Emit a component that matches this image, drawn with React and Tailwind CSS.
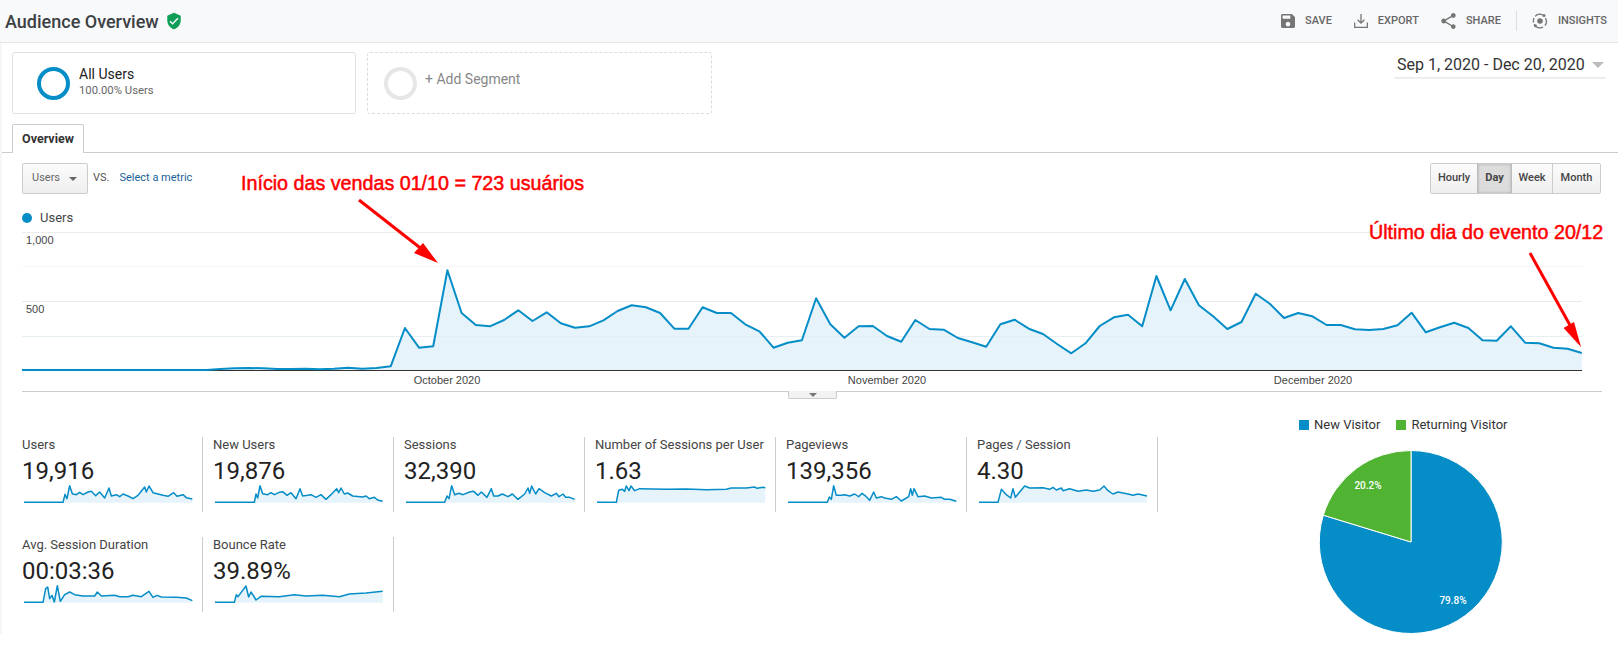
import React from "react";

// measured from the chart, one value per day (Sep 1 - Dec 20)
const users = [
  510, 510, 510, 510, 510, 510, 510, 510, 510, 510, 510, 510, 510, 510, 507, 505, 504, 505, 507, 507, 506, 508, 506,
  503, 506, 504, 499, 384, 443, 439, 211, 339, 375, 379, 360, 331, 363, 337, 370, 383, 379, 361, 333, 316, 322, 339,
  386, 386, 322, 339, 339, 373, 394, 443, 428, 421, 295, 373, 413, 379, 378, 408, 425, 360, 387, 389, 414, 427, 440,
  373, 359, 386, 402, 432, 460, 430, 378, 352, 344, 379, 228, 331, 237, 316, 349, 387, 366, 281, 311, 354, 339, 349,
  375, 375, 388, 390, 387, 376, 338, 397, 382, 368, 384, 421, 422, 379, 428, 430, 443, 446, 459,
];

const chartLine = users.map((v, i) => `${(i * 14.18).toFixed(1)},${(v / 3 - 28).toFixed(1)}`).join(" ");

const metrics = [
  {
    label: "Users",
    value: "19,916",
    x0: 13,
    spark: "13,61 130,61 136,37 142,50 150,11 158,35 170,38 180,31 190,38 205,30 215,28 228,41 240,30 255,48 268,18 275,42 290,38 300,44 310,36 325,42 340,50 355,40 375,15 380,30 388,12 400,32 415,36 430,40 445,43 462,32 472,43 490,38 500,47 518,51",
  },
  {
    label: "New Users",
    value: "19,876",
    x0: 587,
    spark: "587,61 705,61 710,36 715,48 722,11 730,35 745,38 755,32 765,38 780,31 790,29 803,40 815,32 830,50 842,20 850,42 865,40 875,38 890,46 905,38 920,52 935,38 952,20 958,32 965,18 975,36 985,33 1000,42 1030,45 1040,42 1050,50 1065,46 1075,54 1090,58",
  },
  {
    label: "Sessions",
    value: "32,390",
    x0: 19,
    spark: "19,61 135,61 142,42 148,50 156,11 165,38 178,34 190,38 210,30 222,28 235,40 245,30 262,46 275,20 282,42 295,42 308,36 325,44 338,36 355,52 375,36 385,18 390,34 396,12 408,36 418,20 435,32 455,42 470,34 478,44 490,36 498,46 510,46 525,52",
  },
  {
    label: "Number of Sessions per User",
    value: "1.63",
    x0: 592,
    spark: "592,61 650,61 657,25 668,22 675,28 680,12 688,26 694,12 705,26 720,20 760,21 800,22 860,21 920,23 980,22 995,18 1040,18 1065,15 1072,19 1090,16 1097,17",
  },
  {
    label: "Pageviews",
    value: "139,356",
    x0: 10,
    spark: "10,61 128,61 134,45 140,52 147,11 155,40 170,40 180,38 195,42 210,36 222,44 232,34 245,44 255,55 267,30 275,48 290,44 300,48 320,52 335,44 350,57 372,44 378,20 383,40 388,20 400,44 420,42 440,48 470,46 480,52 495,52 515,58",
  },
  {
    label: "Pages / Session",
    value: "4.30",
    x0: 583,
    spark: "583,61 640,61 650,22 665,38 678,48 685,20 692,46 705,30 720,12 735,18 775,17 795,22 805,16 815,24 830,18 835,26 855,20 880,28 905,24 925,28 945,24 958,12 970,26 985,36 1000,30 1030,36 1045,40 1060,36 1087,42",
  },
  {
    label: "Avg. Session Duration",
    value: "00:03:36",
    x0: 13,
    spark: "13,61 70,61 78,20 84,15 90,50 97,40 104,60 113,11 122,58 135,38 150,30 165,38 190,42 225,42 233,30 245,42 285,40 300,44 325,44 340,40 365,44 388,28 400,46 412,40 425,45 470,46 500,48 518,56",
  },
  {
    label: "Bounce Rate",
    value: "39.89%",
    x0: 587,
    spark: "587,61 645,61 651,38 656,44 665,32 680,12 688,45 695,30 703,42 710,54 725,43 780,44 825,38 860,42 910,40 960,44 990,36 1040,33 1090,28",
  },
];

function HeaderAction({ icon, label }) {
  return (
    <div className="flex items-center gap-[10px]">
      {icon}
      <span className="text-[11px] font-medium text-[#666]">{label}</span>
    </div>
  );
}

function Metric({ metric, first }) {
  const pts = metric.spark.split(" ");
  const last = pts[pts.length - 1].split(",")[0];
  return (
    <div className={`h-[75px] border-r border-[#ccc] ${first ? "" : "pl-[10px]"}`}>
      <div className="h-[15px] text-[13px] leading-[15px] text-[#444] whitespace-nowrap">{metric.label}</div>
      <div className="mt-[7px] h-[24px] text-[24px] leading-[24px] text-[#222]">{metric.value}</div>
      <svg viewBox={`${metric.x0} 0 510 72`} className="ml-[2px] mt-[-1px] h-[24px] w-[170px]">
        <polygon points={`${metric.x0},62 ${metric.spark} ${last},62`} fill="#e6f3fa" />
        <polyline points={metric.spark} fill="none" stroke="#058dc7" strokeWidth="4.5" strokeLinejoin="round" />
      </svg>
    </div>
  );
}

function Arrow({ d, head }) {
  return (
    <>
      <path d={d} stroke="#ff0000" strokeWidth="3" fill="none" />
      <polygon points={head} fill="#ff0000" />
    </>
  );
}

export default function App() {
  return (
    <div className="relative h-[664px] w-[1618px] overflow-hidden bg-white font-['Roboto',sans-serif]">
      <header className="flex h-[43px] items-center justify-between border-b border-[#e4e4e4] bg-[#f8f9fa] pl-[5px] pr-[11px]">
        <div className="flex items-center gap-[6px]">
          <h1 className="text-[18px] font-medium text-[#3c4043]">Audience Overview</h1>
          <svg viewBox="0 0 24 24" className="h-[18px] w-[18px]" fill="#0f9d58">
            <path d="M12 1L3 5v6c0 5.55 3.84 10.74 9 12 5.16-1.26 9-6.45 9-12V5l-9-4zm-2 16l-4-4 1.41-1.41L10 14.17l6.59-6.59L18 9l-8 8z" />
          </svg>
        </div>
        <div className="flex items-center gap-[15px]">
          <div className="flex items-center gap-[22px]">
            <HeaderAction
              label="SAVE"
              icon={
                <svg viewBox="3 3 18 18" className="h-[14px] w-[14px]" fill="#757575">
                  <path d="M17 3H5c-1.11 0-2 .9-2 2v14c0 1.1.89 2 2 2h14c1.1 0 2-.9 2-2V7l-4-4zm-5 16c-1.66 0-3-1.34-3-3s1.34-3 3-3 3 1.34 3 3-1.34 3-3 3zm3-10H5V5h10v4z" />
                </svg>
              }
            />
            <HeaderAction
              label="EXPORT"
              icon={
                <svg viewBox="0 0 14 14" className="h-[14px] w-[14px]" fill="none" stroke="#757575" strokeWidth="1.3">
                  <path d="M7 0v9M3.6 5.8 7 9.2l3.4-3.4M.6 8.5v4.9h12.8V8.5" />
                </svg>
              }
            />
            <HeaderAction
              label="SHARE"
              icon={
                <svg viewBox="3 2 18 20" className="h-[16px] w-[15px]" fill="#757575">
                  <path d="M18 16.08c-.76 0-1.44.3-1.96.77L8.91 12.7c.05-.23.09-.46.09-.7s-.04-.47-.09-.7l7.05-4.11c.54.5 1.25.81 2.04.81 1.66 0 3-1.34 3-3s-1.34-3-3-3-3 1.34-3 3c0 .24.04.47.09.7L8.04 9.81C7.5 9.31 6.79 9 6 9c-1.66 0-3 1.34-3 3s1.34 3 3 3c.79 0 1.5-.31 2.04-.81l7.12 4.16c-.05.21-.08.43-.08.65 0 1.61 1.31 2.92 2.92 2.92 1.61 0 2.92-1.31 2.92-2.92s-1.31-2.92-2.92-2.92z" />
                </svg>
              }
            />
          </div>
          <div className="flex h-[20px] items-center border-l border-[#ddd] pl-[15px]">
            <HeaderAction
              label="INSIGHTS"
              icon={
                <svg viewBox="0 0 16 16" className="h-[16px] w-[16px]">
                  <path d="M3 3.4A6.7 6.7 0 0 1 10.6 1.8M13.4 5A6.7 6.7 0 0 1 13 12.6M11 14.2A6.7 6.7 0 0 1 2 11.2M1.6 9.5A6.7 6.7 0 0 1 2 5" fill="none" stroke="#757575" strokeWidth="1.3" />
                  <circle cx="8" cy="8" r="2.8" fill="#757575" />
                  <circle cx="12" cy="2.6" r="1.5" fill="#757575" />
                  <circle cx="3.4" cy="12.8" r="1.5" fill="#757575" />
                </svg>
              }
            />
          </div>
        </div>
      </header>

      <div className="border-l-2 border-[#f6f6f6]">
        <div className="flex items-start justify-between pl-[10px] pr-[12px] pt-[9px]">
          <div className="flex gap-[11px]">
            <div className="flex h-[62px] w-[344px] items-center gap-[9px] rounded-[3px] border border-[#e0e0e0] pl-[24px]">
              <div className="h-[33px] w-[33px] rounded-full border-[4px] border-[#058dc7]" />
              <div className="-mt-[3px]">
                <div className="text-[14px] leading-[17px] text-[#222]">All Users</div>
                <div className="text-[11.3px] leading-[15px] text-[#666]">100.00% Users</div>
              </div>
            </div>
            <div className="flex h-[62px] w-[345px] items-center gap-[9px] rounded-[3px] border border-dashed border-[#dcdcdc] pl-[16px]">
              <div className="h-[33px] w-[33px] rounded-full border-[4px] border-[#e6e6e6]" />
              <div className="-mt-[8px] -ml-[1px] text-[14px] text-[#888]">+ Add Segment</div>
            </div>
          </div>
          <div className="flex h-[27px] w-[212px] items-start gap-[8px] border-b-2 border-[#eee] pl-[3px]">
            <span className="text-[16px] leading-[25px] text-[#333]">Sep 1, 2020 - Dec 20, 2020</span>
            <span className="-ml-[1px] mt-[10px] h-0 w-0 border-x-[6px] border-t-[6px] border-x-transparent border-t-[#bbb]" />
          </div>
        </div>

        <div className="mt-[10px] h-[29px] border-b border-[#ccc] pl-[10px]">
          <div className="flex h-[29px] w-[72px] items-center justify-center rounded-t-[2px] border border-b-0 border-[#ccc] bg-white text-[12.5px] font-bold text-[#333]">
            Overview
          </div>
        </div>

        <div className="mt-[10px] flex items-center pl-[20px] pr-[17px]">
          <div className="flex h-[31px] w-[66px] items-center gap-[9px] rounded-[2px] border border-[#ccc] bg-gradient-to-b from-[#fbfbfb] to-[#efefef] pl-[9px] text-[11px] text-[#666]">
            Users
            <span className="h-0 w-0 border-x-[4px] border-t-[4px] border-x-transparent border-t-[#666]" />
          </div>
          <span className="ml-[5px] text-[11px] text-[#555]">VS.</span>
          <span className="ml-[10px] text-[11px] text-[#1a5f96]">Select a metric</span>
          <div className="ml-auto flex h-[31px] rounded-[2px] border border-[#ccc] text-[11px] font-medium text-[#444]">
            <div className="flex w-[46px] items-center justify-center bg-gradient-to-b from-[#fbfbfb] to-[#efefef]">Hourly</div>
            <div className="flex w-[35px] items-center justify-center border-x border-[#bbb] bg-[#dcdcdc] font-bold shadow-[inset_0_0_3px_#aaa]">Day</div>
            <div className="flex w-[41px] items-center justify-center border-r border-[#ccc] bg-gradient-to-b from-[#fbfbfb] to-[#efefef]">Week</div>
            <div className="flex w-[47px] items-center justify-center bg-gradient-to-b from-[#fbfbfb] to-[#efefef]">Month</div>
          </div>
        </div>

        <div className="ml-[20px] mt-[15px] flex h-[17px] items-center gap-[8px] text-[13px] text-[#444]">
          <span className="h-[10px] w-[10px] rounded-full bg-[#058dc7]" />
          Users
        </div>

        <div className="relative ml-[20px] mt-[2px] h-[172px] w-[1580px]">
          <svg viewBox="0 0 1580 172" className="h-[172px] w-[1580px] font-['Liberation_Sans',sans-serif]">
            <path d="M0 4.5H1560M0 73.5H1560" stroke="#ececec" />
            <path d="M0 38.5H1560M0 108.5H1560" stroke="#f5f5f5" />
            <polygon points={`0,142 ${chartLine} 1560,142`} fill="#e6f3fa" />
            <path d="M0 108.5H1560" stroke="#dbe9f0" strokeOpacity="0.5" />
            <path d="M0 73.5H1560" stroke="#dbe9f0" strokeOpacity="0.3" />
            <path d="M0 142.5H1560" stroke="#333" />
            <polyline points={chartLine} fill="none" stroke="#058dc7" strokeWidth="2" strokeLinejoin="round" />
            <text x="4" y="16" fontSize="11" fill="#444">1,000</text>
            <text x="4" y="85" fontSize="11" fill="#444">500</text>
            <text x="425" y="156" fontSize="11" fill="#444" textAnchor="middle">October 2020</text>
            <text x="865" y="156" fontSize="11" fill="#444" textAnchor="middle">November 2020</text>
            <text x="1291" y="156" fontSize="11" fill="#444" textAnchor="middle">December 2020</text>
            <path d="M0 163.5H1580" stroke="#ccc" />
          </svg>
          <div className="absolute left-[766px] top-[163px] flex h-[8px] w-[49px] items-center justify-center rounded-b-[2px] border border-t-0 border-[#ccc] bg-[#f2f2f2]">
            <span className="h-0 w-0 border-x-[4px] border-t-[4px] border-x-transparent border-t-[#777]" />
          </div>
        </div>

        <div className="flex items-start pl-[20px]">
          <div className="mt-[37px] grid w-[1136px] grid-cols-[181px_repeat(5,191px)] gap-y-[25px]">
            {metrics.map((m, i) => (
              <Metric key={m.label} metric={m} first={i === 0 || i === 6} />
            ))}
          </div>
          <div className="ml-[141px] mt-[18px]">
            <div className="flex h-[14px] items-center text-[13px] text-[#333]">
              <span className="mr-[5px] h-[10px] w-[10px] bg-[#058dc7]" />
              New Visitor
              <span className="ml-[16px] mr-[5px] h-[10px] w-[10px] bg-[#50b432]" />
              Returning Visitor
            </div>
            <svg viewBox="0 0 184 184" className="ml-[20px] mt-[18px] h-[184px] w-[184px]">
              <path d="M92 92 L92 .5 A91.5 91.5 0 1 1 4.3 65.2 Z" fill="#058dc7" stroke="#fff" />
              <path d="M92 92 L4.3 65.2 A91.5 91.5 0 0 1 92 .5 Z" fill="#50b432" stroke="#fff" />
              <text x="49" y="39" fontSize="10" fill="#fff" textAnchor="middle" fontWeight="500">20.2%</text>
              <text x="134" y="154" fontSize="10" fill="#fff" textAnchor="middle" fontWeight="500">79.8%</text>
            </svg>
          </div>
        </div>
      </div>

      {/* red notes pasted on top of the report */}
      <div className="absolute left-[241px] top-[171px] font-['Liberation_Sans',sans-serif] text-[19.7px] leading-[24px] text-[#ff0000] [-webkit-text-stroke:0.5px_#ff0000] whitespace-nowrap">
        Início das vendas 01/10 = 723 usuários
      </div>
      <div className="absolute left-[1369px] top-[220px] font-['Liberation_Sans',sans-serif] text-[19.7px] leading-[24px] text-[#ff0000] [-webkit-text-stroke:0.5px_#ff0000] whitespace-nowrap">
        Último dia do evento 20/12
      </div>
      <svg viewBox="0 0 1618 664" className="pointer-events-none absolute left-0 top-0 h-[664px] w-[1618px]">
        <Arrow d="M359 200 L428 254" head="438,263 423,243 414,253" />
        <Arrow d="M1530 253 L1571 327" head="1581,347 1574,322 1563.6,328" />
      </svg>
    </div>
  );
}
